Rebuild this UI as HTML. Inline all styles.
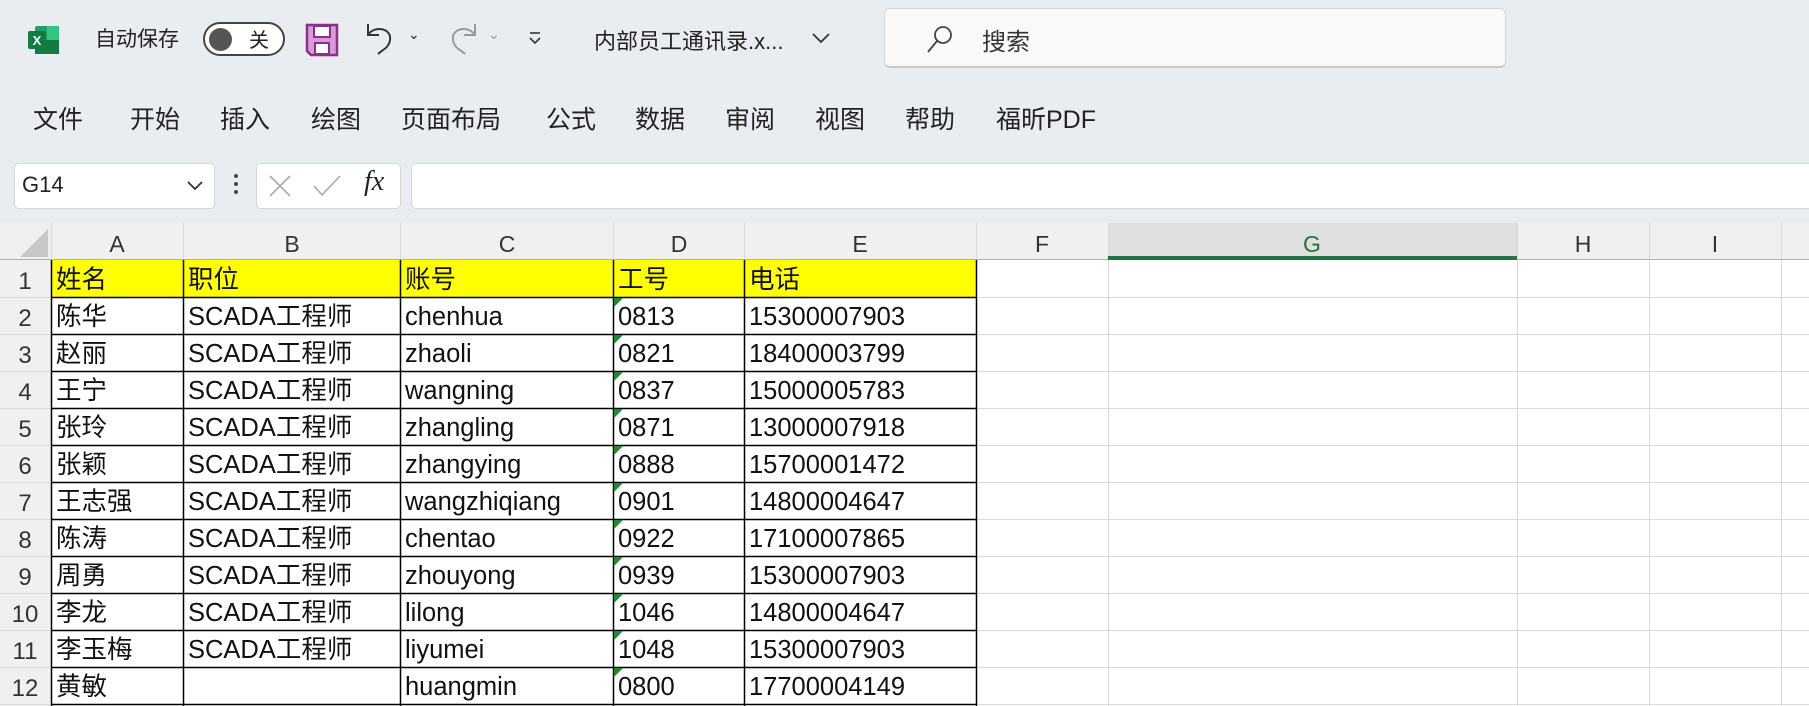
<!DOCTYPE html>
<html><head><meta charset="utf-8"><style>
*{margin:0;padding:0;box-sizing:border-box}
html,body{width:1809px;height:706px;overflow:hidden}
body{background:#e9edf2;font-family:"Liberation Sans","Noto Sans CJK SC",sans-serif;position:relative;color:#222}
.a{position:absolute;white-space:nowrap}
.menu{top:100px;font-size:25px;color:#222}
.cell{position:absolute;font-size:25.5px;line-height:37px;padding-left:5px;color:#111;white-space:nowrap;overflow:hidden;padding-top:2px}
</style></head><body>
<svg class="a" style="left:27px;top:24px" width="34" height="32" viewBox="0 0 34 32">
<rect x="8" y="2" width="24" height="28" rx="2" fill="#21a366"/>
<rect x="8" y="16" width="24" height="14" fill="#107c41"/>
<rect x="20" y="2" width="12" height="14" fill="#33c481"/>
<rect x="1" y="7" width="18" height="18" rx="2" fill="#107c41"/>
<text x="10" y="21" font-size="13" font-weight="bold" fill="#fff" text-anchor="middle" font-family="Liberation Sans">X</text>
</svg>
<div class="a" style="left:95px;top:23px;font-size:21px">自动保存</div>
<div class="a" style="left:203px;top:22px;width:82px;height:34px;border:2px solid #444;border-radius:17px;background:#fff"></div>
<div class="a" style="left:209px;top:28px;width:23px;height:23px;border-radius:50%;background:#555"></div>
<div class="a" style="left:249px;top:24px;font-size:20px">关</div>
<svg class="a" style="left:305px;top:23px" width="34" height="34" viewBox="0 0 34 34">
<path d="M2 2H32V32H6L2 28Z" fill="#d99bd8" stroke="#8b2e8c" stroke-width="2.5"/>
<rect x="9" y="3" width="16" height="11" fill="#fff" stroke="#8b2e8c" stroke-width="2"/>
<rect x="10" y="20" width="14" height="11" fill="#fff" stroke="#8b2e8c" stroke-width="2"/>
</svg>
<svg class="a" style="left:362px;top:20px" width="40" height="40" viewBox="0 0 40 40" fill="none" stroke="#333" stroke-width="2">
<path d="M6 4V15H17"/><path d="M6 15C12 5 30 8 28 20C27 28 20 30 16 34"/></svg>
<div class="a" style="left:408px;top:26px;font-size:14px">&#8964;</div>
<svg class="a" style="left:441px;top:20px" width="40" height="40" viewBox="0 0 40 40" fill="none" stroke="#999" stroke-width="2">
<path d="M34 4V15H23"/><path d="M34 15C28 5 10 8 12 20C13 28 20 30 24 34"/></svg>
<div class="a" style="left:488px;top:26px;font-size:14px;color:#999">&#8964;</div>
<svg class="a" style="left:527px;top:30px" width="16" height="16" viewBox="0 0 16 16" fill="none" stroke="#333" stroke-width="1.6"><path d="M3 3H13"/><path d="M3 8L8 13L13 8"/></svg>
<div class="a" style="left:594px;top:24px;font-size:22px">内部员工通讯录.x...</div>
<svg class="a" style="left:811px;top:30px" width="20" height="16" viewBox="0 0 20 16" fill="none" stroke="#333" stroke-width="1.8"><path d="M2 4L10 12L18 4"/></svg>
<div class="a" style="left:884px;top:8px;width:622px;height:60px;background:#f9f9f9;border:1px solid #d6d6d6;border-bottom:2px solid #c8c8c8;border-radius:6px"></div>
<svg class="a" style="left:925px;top:24px" width="30" height="30" viewBox="0 0 30 30" fill="none" stroke="#444" stroke-width="1.8"><circle cx="18" cy="11" r="8"/><path d="M12 17L3 28"/></svg>
<div class="a" style="left:982px;top:22px;font-size:24px;color:#333">搜索</div>
<div class="a menu" style="left:33px">文件</div>
<div class="a menu" style="left:130px">开始</div>
<div class="a menu" style="left:220px">插入</div>
<div class="a menu" style="left:311px">绘图</div>
<div class="a menu" style="left:401px">页面布局</div>
<div class="a menu" style="left:546px">公式</div>
<div class="a menu" style="left:635px">数据</div>
<div class="a menu" style="left:725px">审阅</div>
<div class="a menu" style="left:815px">视图</div>
<div class="a menu" style="left:905px">帮助</div>
<div class="a menu" style="left:996px">福昕PDF</div>
<div class="a" style="left:14px;top:163px;width:201px;height:46px;background:#fff;border:1px solid #d6d6d6;border-radius:5px"></div>
<div class="a" style="left:22px;top:172px;font-size:22px">G14</div>
<svg class="a" style="left:186px;top:180px" width="18" height="12" viewBox="0 0 18 12" fill="none" stroke="#333" stroke-width="1.8"><path d="M2 2L9 9L16 2"/></svg>
<div class="a" style="left:234px;top:174px;width:4px;height:4px;background:#444;border-radius:50%;box-shadow:0 8px 0 #444,0 16px 0 #444"></div>
<div class="a" style="left:256px;top:163px;width:145px;height:46px;background:#fff;border:1px solid #d6d6d6;border-radius:5px"></div>
<svg class="a" style="left:266px;top:172px" width="80" height="28" viewBox="0 0 80 28" fill="none" stroke="#aaa" stroke-width="1.6"><path d="M4 4L24 24M24 4L4 24"/><path d="M48 14L56 23L74 4"/></svg>
<div class="a" style="left:364px;top:166px;font-size:28px;font-style:italic;font-family:'Liberation Serif',serif">fx</div>
<div class="a" style="left:411px;top:163px;width:1398px;height:46px;background:#fff;border:1px solid #d6d6d6;border-right:none;border-radius:5px 0 0 5px"></div>
<svg class="a" style="left:0;top:223px" width="1809" height="483" viewBox="0 0 1809 483">
<rect width="1809" height="483" fill="#fff"/>
<rect width="1809" height="37" fill="#f0f0f0"/>
<rect x="0" y="37" width="51" height="446" fill="#f0f0f0"/>
<rect x="1108" y="0" width="409" height="37" fill="#e0e0e0"/>
<path d="M48 6V34H20Z" fill="#c8c8c8"/>
<rect x="51" y="37" width="925" height="38" fill="#ffff00"/>
<g stroke="#dadada" stroke-width="1">
<path d="M51.5 0V483M183.5 0V483M400.5 0V483M613.5 0V483M744.5 0V483M976.5 0V483M1108.5 0V483M1517.5 0V483M1649.5 0V483M1781.5 0V483"/>
<path d="M0 74.5H1809M0 111.5H1809M0 148.5H1809M0 185.5H1809M0 222.5H1809M0 259.5H1809M0 296.5H1809M0 333.5H1809M0 370.5H1809M0 407.5H1809M0 444.5H1809M0 481.5H1809"/>
</g>
<path d="M0 36.5H1809" stroke="#b0b0b0"/>
<g fill="#e6e6e6"><path d="M1535 683L1580 625V683Z"/><text x="1590" y="680" font-family="Noto Sans CJK SC" font-size="50">先知社区</text></g>
<g stroke="#000" stroke-width="1.5">
<path d="M183.5 37V483M400.5 37V483M613.5 37V483M744.5 37V483M976.5 37V483M51.5 37V483"/>
<path d="M51 74.5H977M51 111.5H977M51 148.5H977M51 185.5H977M51 222.5H977M51 259.5H977M51 296.5H977M51 333.5H977M51 370.5H977M51 407.5H977M51 444.5H977M51 481.5H977"/>
</g>
<rect x="1108" y="33" width="409" height="4" fill="#217346"/>
<g fill="#1e8a2e">
<path d="M614 75h9l-9 9z"/><path d="M614 112h9l-9 9z"/><path d="M614 149h9l-9 9z"/><path d="M614 186h9l-9 9z"/><path d="M614 223h9l-9 9z"/><path d="M614 260h9l-9 9z"/><path d="M614 297h9l-9 9z"/><path d="M614 334h9l-9 9z"/><path d="M614 371h9l-9 9z"/><path d="M614 408h9l-9 9z"/><path d="M614 445h9l-9 9z"/>
</g>
<g font-family="Liberation Sans" font-size="23" fill="#333" text-anchor="middle">
<text x="117" y="29">A</text><text x="292" y="29">B</text><text x="507" y="29">C</text><text x="679" y="29">D</text><text x="860" y="29">E</text><text x="1042" y="29">F</text><text x="1312" y="29" fill="#217346">G</text><text x="1583" y="29">H</text><text x="1715" y="29">I</text>
</g>
<g font-family="Liberation Sans" font-size="24" fill="#333" text-anchor="middle">
<text x="25" y="66">1</text><text x="25" y="103">2</text><text x="25" y="140">3</text><text x="25" y="177">4</text><text x="25" y="214">5</text><text x="25" y="251">6</text><text x="25" y="288">7</text><text x="25" y="325">8</text><text x="25" y="362">9</text><text x="25" y="399">10</text><text x="25" y="436">11</text><text x="25" y="473">12</text>
</g>
</svg>
<div style="position:absolute;left:0;top:260px;width:1000px;height:446px;overflow:hidden">
<div class="cell" style="left:51px;top:0">姓名</div><div class="cell" style="left:183px;top:0">职位</div><div class="cell" style="left:400px;top:0">账号</div><div class="cell" style="left:613px;top:0">工号</div><div class="cell" style="left:744px;top:0">电话</div>
<div class="cell" style="left:51px;top:37px">陈华</div><div class="cell" style="left:183px;top:37px">SCADA工程师</div><div class="cell" style="left:400px;top:37px">chenhua</div><div class="cell" style="left:613px;top:37px">0813</div><div class="cell" style="left:744px;top:37px">15300007903</div>
<div class="cell" style="left:51px;top:74px">赵丽</div><div class="cell" style="left:183px;top:74px">SCADA工程师</div><div class="cell" style="left:400px;top:74px">zhaoli</div><div class="cell" style="left:613px;top:74px">0821</div><div class="cell" style="left:744px;top:74px">18400003799</div>
<div class="cell" style="left:51px;top:111px">王宁</div><div class="cell" style="left:183px;top:111px">SCADA工程师</div><div class="cell" style="left:400px;top:111px">wangning</div><div class="cell" style="left:613px;top:111px">0837</div><div class="cell" style="left:744px;top:111px">15000005783</div>
<div class="cell" style="left:51px;top:148px">张玲</div><div class="cell" style="left:183px;top:148px">SCADA工程师</div><div class="cell" style="left:400px;top:148px">zhangling</div><div class="cell" style="left:613px;top:148px">0871</div><div class="cell" style="left:744px;top:148px">13000007918</div>
<div class="cell" style="left:51px;top:185px">张颖</div><div class="cell" style="left:183px;top:185px">SCADA工程师</div><div class="cell" style="left:400px;top:185px">zhangying</div><div class="cell" style="left:613px;top:185px">0888</div><div class="cell" style="left:744px;top:185px">15700001472</div>
<div class="cell" style="left:51px;top:222px">王志强</div><div class="cell" style="left:183px;top:222px">SCADA工程师</div><div class="cell" style="left:400px;top:222px">wangzhiqiang</div><div class="cell" style="left:613px;top:222px">0901</div><div class="cell" style="left:744px;top:222px">14800004647</div>
<div class="cell" style="left:51px;top:259px">陈涛</div><div class="cell" style="left:183px;top:259px">SCADA工程师</div><div class="cell" style="left:400px;top:259px">chentao</div><div class="cell" style="left:613px;top:259px">0922</div><div class="cell" style="left:744px;top:259px">17100007865</div>
<div class="cell" style="left:51px;top:296px">周勇</div><div class="cell" style="left:183px;top:296px">SCADA工程师</div><div class="cell" style="left:400px;top:296px">zhouyong</div><div class="cell" style="left:613px;top:296px">0939</div><div class="cell" style="left:744px;top:296px">15300007903</div>
<div class="cell" style="left:51px;top:333px">李龙</div><div class="cell" style="left:183px;top:333px">SCADA工程师</div><div class="cell" style="left:400px;top:333px">lilong</div><div class="cell" style="left:613px;top:333px">1046</div><div class="cell" style="left:744px;top:333px">14800004647</div>
<div class="cell" style="left:51px;top:370px">李玉梅</div><div class="cell" style="left:183px;top:370px">SCADA工程师</div><div class="cell" style="left:400px;top:370px">liyumei</div><div class="cell" style="left:613px;top:370px">1048</div><div class="cell" style="left:744px;top:370px">15300007903</div>
<div class="cell" style="left:51px;top:407px">黄敏</div><div class="cell" style="left:400px;top:407px">huangmin</div><div class="cell" style="left:613px;top:407px">0800</div><div class="cell" style="left:744px;top:407px">17700004149</div>
</div>
</body></html>
